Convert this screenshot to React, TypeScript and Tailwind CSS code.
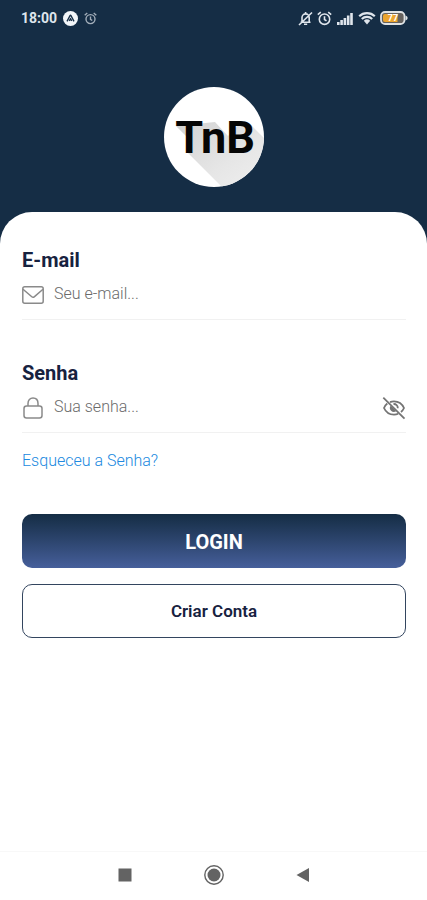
import type { ReactNode } from "react";

function StatusBar() {
  return (
    <div className="flex h-9 items-center justify-between pl-[21px] pr-[19px] text-[#dfe5ec]">
      <div className="flex items-center gap-[6px]">
        <span className="text-sm font-bold leading-4">18:00</span>
        <svg width="15" height="15" viewBox="0 0 15 15" aria-hidden="true">
          <circle cx="7.5" cy="7.5" r="7.5" fill="#f3f6f9" />
          <path d="M4 10.4 7 4.600q.5-.8 1 0l3 5.800M6.200 9.800l1.300-2 1.300 2" fill="none" stroke="#152d45" strokeWidth="1.3" />
        </svg>
        <AlarmIcon className="size-[13px] opacity-70" />
      </div>

      <div className="flex items-center gap-1">
        <svg width="15" height="15" viewBox="0 0 15 15" fill="none" stroke="currentColor" strokeWidth="1.6" aria-hidden="true">
          <path d="M2.500 11.200h10M4 11V6.500a3.600 3.600 0 0 1 7.200 0V11M6 13.300h3.200M7.600 1v2M1 14 14 1.500" />
        </svg>
        <AlarmIcon className="size-[15px]" />
        <svg width="16" height="13" viewBox="0 0 16 13" fill="currentColor" className="ml-px" aria-hidden="true">
          <path d="M0 10h2.6v3H0zM3.300 8h2.600v5H3.300zM6.600 6h2.600v7H6.600zM9.900 3.500h2.600V13H9.900zM13.200 1h2.600v12h-2.600z" />
        </svg>
        <svg width="18" height="14" viewBox="0 0 18 14" fill="none" stroke="currentColor" strokeWidth="2.2" className="ml-px" aria-hidden="true">
          <path d="M1.200 5.200a11.200 11.200 0 0 1 15.600 0M3.800 8a7.500 7.500 0 0 1 10.400 0" />
          <path d="M5.800 9.800 9 13.400l3.200-3.600a4.800 4.800 0 0 0-6.400 0z" fill="currentColor" stroke="none" />
        </svg>
        <svg width="28" height="14" viewBox="0 0 28 14" aria-hidden="true">
          <rect x="1" y="1" width="23.5" height="12" rx="4" fill="#65625f" stroke="#dfe3e6" strokeWidth="1.8" />
          <path d="M5 3h12.500v8H5a2 2 0 0 1-2-2V5a2 2 0 0 1 2-2z" fill="#eca52f" />
          <path d="M25.500 4.500q2.200.8 2.200 2.500t-2.200 2.500z" fill="#dfe3e6" />
          <text x="13" y="10.3" textAnchor="middle" fontSize="9" fontWeight="700" fill="#fff">77</text>
        </svg>
      </div>
    </div>
  );
}

function AlarmIcon({ className }: { className: string }) {
  return (
    <svg viewBox="0 0 15 15" fill="none" stroke="currentColor" strokeWidth="1.6" className={className} aria-hidden="true">
      <circle cx="7.5" cy="8.2" r="5.2" />
      <path d="M7.500 5.300v3.200l2 1.300M.8 3.700l3-2.500M14.200 3.700l-3-2.500" />
    </svg>
  );
}

function Logo() {
  return (
    <svg width="102" height="102" viewBox="0 0 102 102" role="img" aria-label="TnB">
      <defs>
        <clipPath id="disc">
          <circle cx="51" cy="51" r="50" />
        </clipPath>
        <linearGradient id="shade" x1="0" y1="0" x2="1" y2="1">
          <stop offset="0" stopColor="#d2d2d2" />
          <stop offset="0.6" stopColor="#e6e6e6" />
          <stop offset="1" stopColor="#efefef" />
        </linearGradient>
      </defs>
      <circle cx="51" cy="51" r="50" fill="#fff" />
      <g clipPath="url(#disc)">
        <path d="M13 40 25 52v15l34 34h43V53L87 38l-9-2-13 14-13-14z" fill="url(#shade)" />
      </g>
      <text x="52" y="67" textAnchor="middle" fontSize="45" fontWeight="700" fill="#050505">TnB</text>
    </svg>
  );
}

function MailIcon() {
  return (
    <svg width="22" height="18" viewBox="0 0 22 18" fill="none" stroke="#8a8a8a" strokeWidth="1.5" strokeLinejoin="round" aria-hidden="true">
      <rect x=".8" y=".8" width="20.4" height="16.4" rx="2" />
      <path d="m1 3.200 8.800 7.600q1.200 1 2.400 0L21 3.200" />
    </svg>
  );
}

function LockIcon() {
  return (
    <svg width="22" height="22" viewBox="0 0 22 22" fill="none" stroke="#8a8a8a" strokeWidth="1.5" aria-hidden="true">
      <rect x="2" y="9" width="18" height="12" rx="2.500" />
      <path d="M6 9V6.500C6 3.200 8 1 11 1s5 2.200 5 5.500V9" />
    </svg>
  );
}

function EyeOffIcon() {
  return (
    <svg width="24" height="24" viewBox="0 0 24 24" fill="none" stroke="#747474" strokeWidth="1.8" aria-hidden="true">
      <path d="M8 6.100A10.500 10.500 0 0 1 12 5.300c4.500 0 8.200 2.600 10 6.700a11 11 0 0 1-3 4M16.200 17.800A10.500 10.500 0 0 1 12 18.700C7.500 18.700 3.800 16.100 2 12a11 11 0 0 1 3.300-4.500" />
      <path d="M11.500 8a4 4 0 0 1 4.300 4.300" />
      <path d="M8.600 9.700a4 4 0 0 0 5.500 5.600z" fill="#747474" stroke="none" />
      <path d="m1.300 1.600 21.200 21" />
    </svg>
  );
}

type FieldProps = {
  id: string;
  label: string;
  type: string;
  placeholder: string;
  icon: ReactNode;
  children?: ReactNode;
};

function Field({ id, label, type, placeholder, icon, children }: FieldProps) {
  return (
    <div className="flex flex-col">
      <label htmlFor={id} className="text-xl font-bold leading-6 text-[#17223f]">
        {label}
      </label>
      <div className="flex h-12 items-center gap-[10px] border-b border-[#f1f1f1] pb-[2px]">
        {icon}
        <input
          id={id}
          type={type}
          placeholder={placeholder}
          className="h-7 min-w-0 flex-1 bg-transparent pb-[3px] text-base font-light text-[#333] outline-none placeholder:text-[#6b6b6b]"
        />
        {children}
      </div>
    </div>
  );
}

export default function App() {
  return (
    <div className="flex min-h-screen flex-col bg-[#152d45] font-[Roboto,sans-serif]">
      <StatusBar />

      <header className="flex justify-center pb-6 pt-[50px]">
        <Logo />
      </header>

      <main className="flex-1 rounded-t-[32px] bg-white pl-[22px] pr-[21px] pt-9">
        <form className="flex flex-col" onSubmit={(e) => e.preventDefault()}>
          <div className="flex flex-col gap-[41px]">
            <Field id="email" label="E-mail" type="email" placeholder="Seu e-mail..." icon={<MailIcon />} />
            <Field id="senha" label="Senha" type="password" placeholder="Sua senha..." icon={<LockIcon />}>
              <button type="button" aria-label="Mostrar senha">
                <EyeOffIcon />
              </button>
            </Field>
          </div>

          <a href="#" className="mt-4 self-start text-base font-light text-[#2089e0]">
            Esqueceu a Senha?
          </a>

          <div className="mt-[41px] flex flex-col gap-4">
            <button
              type="submit"
              className="h-[54px] rounded-[10px] bg-linear-to-b from-[#152d45] to-[#465f9b] pt-[2px] text-xl font-bold text-white"
            >
              LOGIN
            </button>
            <button
              type="button"
              className="h-[54px] rounded-[10px] border border-[#33455f] pt-[2px] text-[17px] font-semibold text-[#17223f]"
            >
              Criar Conta
            </button>
          </div>
        </form>
      </main>

      <nav className="flex h-[49px] items-center justify-center gap-[72px] border-t border-[#f8f8f8] bg-white pb-[2px] text-[#636363]">
        <button type="button" aria-label="Recentes">
          <svg width="14" height="14" viewBox="0 0 14 14" fill="currentColor">
            <rect x=".5" y=".5" width="13" height="13" />
          </svg>
        </button>
        <button type="button" aria-label="Início">
          <svg width="20" height="20" viewBox="0 0 20 20">
            <circle cx="10" cy="10" r="9.2" fill="none" stroke="currentColor" strokeWidth="1.4" />
            <circle cx="10" cy="10" r="6.5" fill="currentColor" />
          </svg>
        </button>
        <button type="button" aria-label="Voltar">
          <svg width="14" height="14" viewBox="0 0 14 14" fill="currentColor">
            <path d="M.5 7 13 0v14z" />
          </svg>
        </button>
      </nav>
    </div>
  );
}
